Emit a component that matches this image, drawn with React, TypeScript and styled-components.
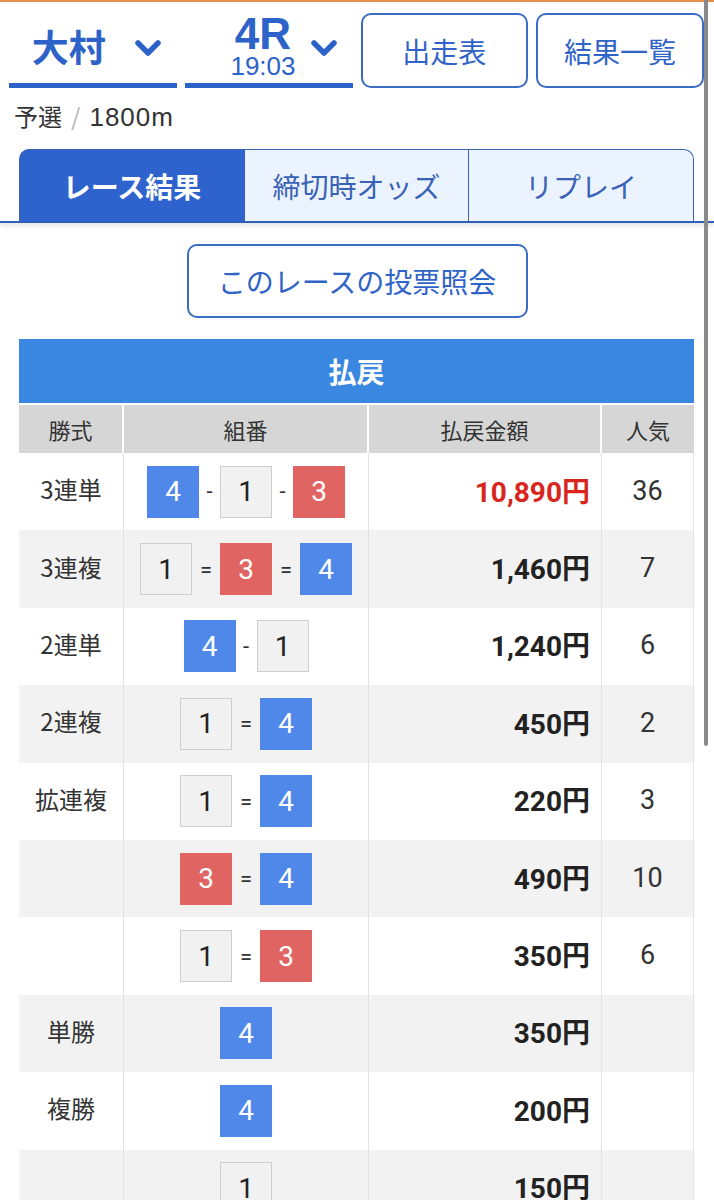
import styled, { createGlobalStyle } from "styled-components";

const GlobalStyle = createGlobalStyle`
  body {
    margin: 0;
    background: #fff;
    font-family: "Noto Sans CJK JP", "Noto Sans", sans-serif;
  }
`;

type Row = {
  kind: string;
  combo: (number | string)[];
  pay: string;
  pop: string;
  hot?: boolean;
};

const rows: Row[] = [
  { kind: "3連単", combo: [4, "-", 1, "-", 3], pay: "10,890円", pop: "36", hot: true },
  { kind: "3連複", combo: [1, "=", 3, "=", 4], pay: "1,460円", pop: "7" },
  { kind: "2連単", combo: [4, "-", 1], pay: "1,240円", pop: "6" },
  { kind: "2連複", combo: [1, "=", 4], pay: "450円", pop: "2" },
  { kind: "拡連複", combo: [1, "=", 4], pay: "220円", pop: "3" },
  { kind: "", combo: [3, "=", 4], pay: "490円", pop: "10" },
  { kind: "", combo: [1, "=", 3], pay: "350円", pop: "6" },
  { kind: "単勝", combo: [4], pay: "350円", pop: "" },
  { kind: "複勝", combo: [4], pay: "200円", pop: "" },
  { kind: "", combo: [1], pay: "150円", pop: "" },
];

const boatColors: Record<number, { bg: string; fg: string; border: string }> = {
  1: { bg: "#f1f1f1", fg: "#222", border: "#cfcfcf" },
  3: { bg: "#e06462", fg: "#fff", border: "#e06462" },
  4: { bg: "#4f88e9", fg: "#fff", border: "#4f88e9" },
};

const Chevron = () => (
  <svg width="28" height="19" viewBox="0 0 28 19">
    <polyline
      points="4,4 14,14 24,4"
      fill="none"
      stroke="#2d62c9"
      strokeWidth="5.5"
      strokeLinecap="round"
      strokeLinejoin="round"
    />
  </svg>
);

export default function App() {
  return (
    <Page>
      <GlobalStyle />
      <Header>
        <Dropdown gap={28}>
          <PlaceName>大村</PlaceName>
          <Chevron />
        </Dropdown>
        <Dropdown gap={14}>
          <RaceBlock>
            <RaceNo>4R</RaceNo>
            <RaceTime>19:03</RaceTime>
          </RaceBlock>
          <Chevron />
        </Dropdown>
        <LinkButton>出走表</LinkButton>
        <LinkButton>結果一覧</LinkButton>
      </Header>

      <Subtitle>
        予選<Slash>/</Slash>
        <Distance>1800m</Distance>
      </Subtitle>

      <Tabs>
        <Tab active>レース結果</Tab>
        <Tab>締切時オッズ</Tab>
        <Tab>リプレイ</Tab>
      </Tabs>

      <VoteWrap>
        <VoteButton>このレースの投票照会</VoteButton>
      </VoteWrap>

      <Table>
        <TableTitle>払戻</TableTitle>
        <HeadRow>
          <HeadCell>勝式</HeadCell>
          <HeadCell>組番</HeadCell>
          <HeadCell>払戻金額</HeadCell>
          <HeadCell>人気</HeadCell>
        </HeadRow>
        {rows.map((r, i) => (
          <BodyRow key={i} shaded={i % 2 === 1}>
            <KindCell>{r.kind}</KindCell>
            <ComboCell>
              {r.combo.map((c, j) =>
                typeof c === "number" ? (
                  <Boat key={j} bg={boatColors[c].bg} fg={boatColors[c].fg} edge={boatColors[c].border}>
                    {c}
                  </Boat>
                ) : (
                  <Sep key={j} wide={c === "="}>
                    {c}
                  </Sep>
                )
              )}
            </ComboCell>
            <PayCell hot={r.hot}>{r.pay}</PayCell>
            <PopCell>{r.pop}</PopCell>
          </BodyRow>
        ))}
      </Table>

      <ScrollThumb />
    </Page>
  );
}

const Page = styled.div`
  border-top: 2px solid #e38d48;
  min-height: 1198px;
  overflow: hidden;
`;

const Header = styled.header`
  display: grid;
  grid-template-columns: repeat(4, minmax(0, 1fr));
  gap: 8px;
  padding: 11px 10px 0 9px;
`;

const Dropdown = styled.div<{ gap: number }>`
  height: 75px;
  box-sizing: border-box;
  border-bottom: 5px solid #2d62c9;
  display: flex;
  align-items: center;
  justify-content: flex-end;
  gap: ${(p) => p.gap}px;
  padding: 0 15px 0 0;
`;

const PlaceName = styled.span`
  font-size: 37px;
  font-weight: 700;
  color: #2d62c9;
  line-height: 1;
  margin-top: -4px;
`;

const RaceBlock = styled.div`
  display: flex;
  flex-direction: column;
  align-items: center;
  color: #2d62c9;
  margin-top: -4px;
`;

const RaceNo = styled.span`
  font-family: "Liberation Sans", Arial, sans-serif;
  font-size: 44px;
  font-weight: 700;
  line-height: 40px;
`;

const RaceTime = styled.span`
  font-family: "Liberation Sans", Arial, sans-serif;
  font-size: 26px;
  line-height: 24px;
`;

const LinkButton = styled.button`
  height: 75px;
  box-sizing: border-box;
  border: 2px solid #3a6cc4;
  border-radius: 10px;
  background: #fff;
  color: #2f63c8;
  font-family: inherit;
  font-size: 28px;
  padding: 0;
`;

const Subtitle = styled.div`
  margin-top: 12px;
  padding: 0 14px;
  font-size: 24px;
  line-height: 32px;
  color: #333;
`;

const Slash = styled.span`
  color: #b5b5b5;
  margin: 0 9px;
`;

const Distance = styled.span`
  font-family: "Liberation Sans", Arial, sans-serif;
  font-size: 26px;
  letter-spacing: 1px;
`;

const Tabs = styled.nav`
  display: flex;
  margin-top: 16px;
  padding: 0 20px 0 19px;
  border-bottom: 2px solid #2f5fb8;
  box-shadow: 0 3px 4px rgba(0, 0, 0, 0.1);
`;

const Tab = styled.div<{ active?: boolean }>`
  flex: 1;
  height: 72px;
  box-sizing: border-box;
  display: flex;
  align-items: center;
  justify-content: center;
  border: 1.5px solid #3a62b6;
  border-bottom: none;
  margin-left: -1.5px;
  background: ${(p) => (p.active ? "#2e62cc" : "#ebf3fe")};
  color: ${(p) => (p.active ? "#fff" : "#3a62b6")};
  font-size: 28px;
  font-weight: ${(p) => (p.active ? 700 : 400)};

  &:first-child {
    margin-left: 0;
    border-top-left-radius: 10px;
  }
  &:last-child {
    border-top-right-radius: 10px;
  }
`;

const VoteWrap = styled.div`
  display: flex;
  justify-content: center;
  margin-top: 21px;
`;

const VoteButton = styled.button`
  width: 341px;
  height: 74px;
  border: 2px solid #3a6cc4;
  border-radius: 10px;
  background: #fff;
  color: #2f63c8;
  font-family: inherit;
  font-size: 28px;
  padding: 0;
`;

const Table = styled.section`
  margin: 21px 20px 0 19px;
`;

const TableTitle = styled.div`
  height: 64px;
  background: #3a87e2;
  color: #fff;
  font-size: 28px;
  font-weight: 700;
  display: flex;
  align-items: center;
  justify-content: center;
  margin-bottom: 2px;
`;

const cols = "105px 245px 233px 1fr";

const HeadRow = styled.div`
  display: grid;
  grid-template-columns: ${cols};
  height: 48px;
`;

const HeadCell = styled.div`
  background: #d6d6d6;
  color: #333;
  font-size: 22px;
  display: flex;
  align-items: center;
  justify-content: center;
  border-right: 2px solid #fff;

  &:last-child {
    border-right: none;
  }
`;

const BodyRow = styled.div<{ shaded: boolean }>`
  display: grid;
  grid-template-columns: ${cols};
  height: 77.4px;
  background: ${(p) => (p.shaded ? "#f2f2f2" : "#fff")};
  border-right: 1px solid #e4e4e4;

  & > div {
    border-right: 1px solid #e2e2e2;
  }
  & > div:last-child {
    border-right: none;
  }
`;

const KindCell = styled.div`
  display: flex;
  align-items: center;
  justify-content: center;
  font-size: 24px;
  color: #333;
  padding-bottom: 6px;
`;

const ComboCell = styled.div`
  display: flex;
  align-items: center;
  justify-content: center;
`;

const Boat = styled.span<{ bg: string; fg: string; edge: string }>`
  width: 52px;
  height: 52px;
  box-sizing: border-box;
  display: flex;
  align-items: center;
  justify-content: center;
  background: ${(p) => p.bg};
  color: ${(p) => p.fg};
  border: 1.5px solid ${(p) => p.edge};
  font-family: Roboto, sans-serif;
  font-size: 28px;
`;

const Sep = styled.span<{ wide: boolean }>`
  width: ${(p) => (p.wide ? 28 : 21)}px;
  text-align: center;
  font-family: Roboto, sans-serif;
  font-size: 22px;
  color: #333;
`;

const PayCell = styled.div<{ hot?: boolean }>`
  display: flex;
  align-items: center;
  justify-content: flex-end;
  padding: 0 11px 4px 0;
  font-family: Roboto, "Noto Sans CJK JP", sans-serif;
  font-size: 28px;
  font-weight: 700;
  color: ${(p) => (p.hot ? "#d8261f" : "#222")};
`;

const PopCell = styled.div`
  display: flex;
  align-items: center;
  justify-content: center;
  padding-bottom: 2px;
  font-family: Roboto, sans-serif;
  font-size: 27px;
  color: #333;
`;

const ScrollThumb = styled.div`
  position: fixed;
  top: 0;
  right: 6px;
  width: 4px;
  height: 746px;
  background: #8a8a8a;
  border-radius: 0 0 3px 3px;
`;
